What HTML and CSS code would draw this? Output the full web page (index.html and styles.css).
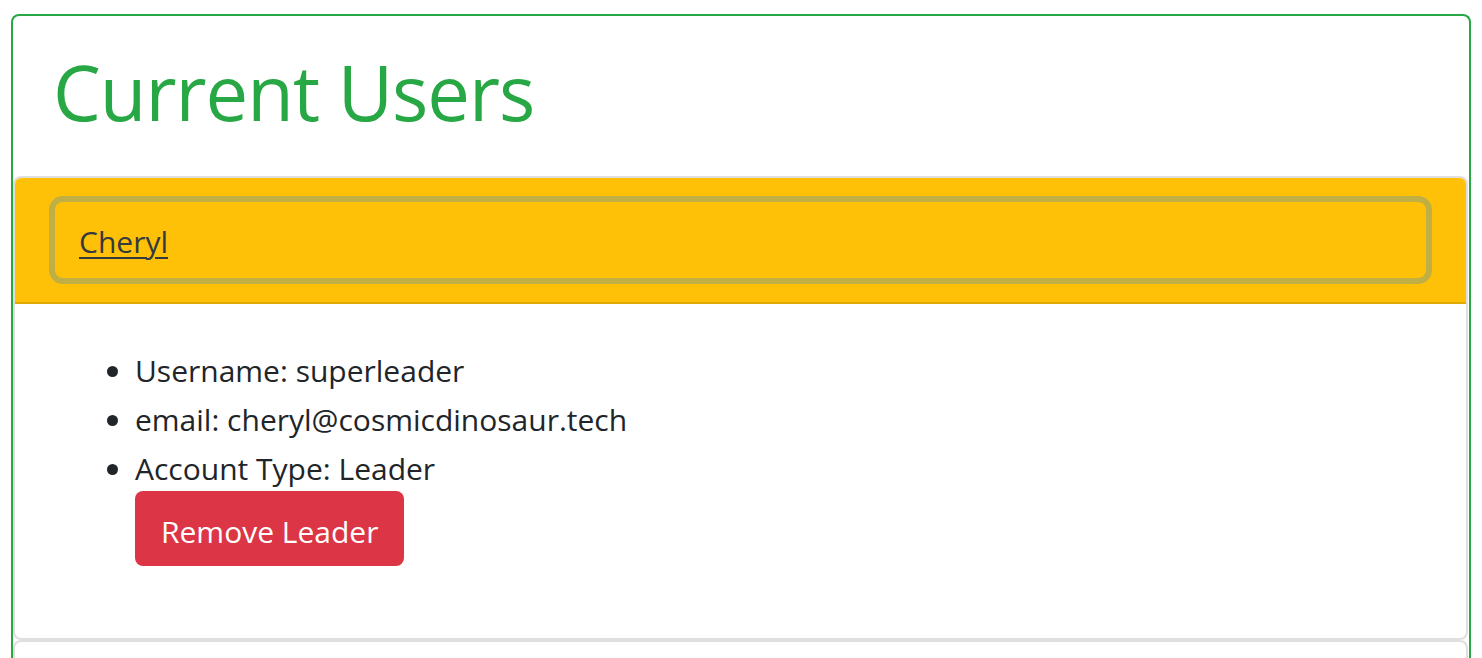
FILE: index.html
```html
<!DOCTYPE html>
<html lang="en">
<head>
<meta charset="utf-8">
<title>Current Users</title>
<link rel="stylesheet" href="styles.css">
</head>
<body>
<div class="page">
  <div class="users-card">
    <div class="title-wrap">
      <h1 class="title">Current Users</h1>
    </div>
    <div class="user-card">
      <div class="user-header">
        <button class="user-toggle" type="button">Cheryl</button>
      </div>
      <div class="user-body">
        <ul class="user-info">
          <li>Username: superleader</li>
          <li>email: cheryl@cosmicdinosaur.tech</li>
          <li>Account Type: Leader<br><button class="btn-remove" type="button">Remove Leader</button></li>
        </ul>
      </div>
    </div>
    <div class="user-card user-card-next"></div>
  </div>
</div>
</body>
</html>
```

FILE: styles.css
```css
html, body {
  margin: 0;
  padding: 0;
  background: #fff;
}
body {
  font-family: "Open Sans", "Noto Sans", sans-serif;
  color: #212529;
  overflow: hidden;
}
.page {
  padding: 14px 11px 0 11px;
}
.users-card {
  border: 2px solid #28a745;
  border-bottom: none;
  border-radius: 8px 8px 0 0;
  height: 700px;
  box-sizing: border-box;
}
.title-wrap {
  padding: 28px 40px 36px 40px;
}
.title {
  margin: 0;
  font-size: 76px;
  line-height: 96px;
  letter-spacing: -1px;
  font-weight: 400;
  color: #28a745;
}
.user-card {
  border: 2px solid #dfdfdf;
  border-radius: 8px;
  margin-right: 1px;
}
.user-header {
  background: #ffc107;
  border-bottom: 2px solid #dfa906;
  border-radius: 6px 6px 0 0;
  padding: 24px 40px;
}
.user-toggle {
  display: block;
  width: 100%;
  height: 76px;
  box-sizing: border-box;
  text-align: left;
  background: transparent;
  border: none;
  border-radius: 8px;
  padding: 2px 24px 0 24px;
  font-family: inherit;
  font-size: 30px;
  color: #343a40;
  text-decoration: underline;
  text-underline-offset: 4px;
  text-decoration-thickness: 2px;
  box-shadow: 0 0 0 6px #bfaf45;
}
.user-body {
  padding: 40px;
}
.user-info {
  margin: 0 0 32px 0;
  padding: 2px 0 0 80px;
  font-size: 30px;
  line-height: 49px;
}
.btn-remove {
  margin-top: -2px;
  height: 75px;
  padding: 5px 26px 0 26px;
  background: #dc3545;
  color: #fff;
  border: none;
  border-radius: 8px;
  font-family: inherit;
  font-size: 30px;
}
.user-card-next {
  margin-top: 0;
  height: 60px;
  border-bottom: none;
}
```
